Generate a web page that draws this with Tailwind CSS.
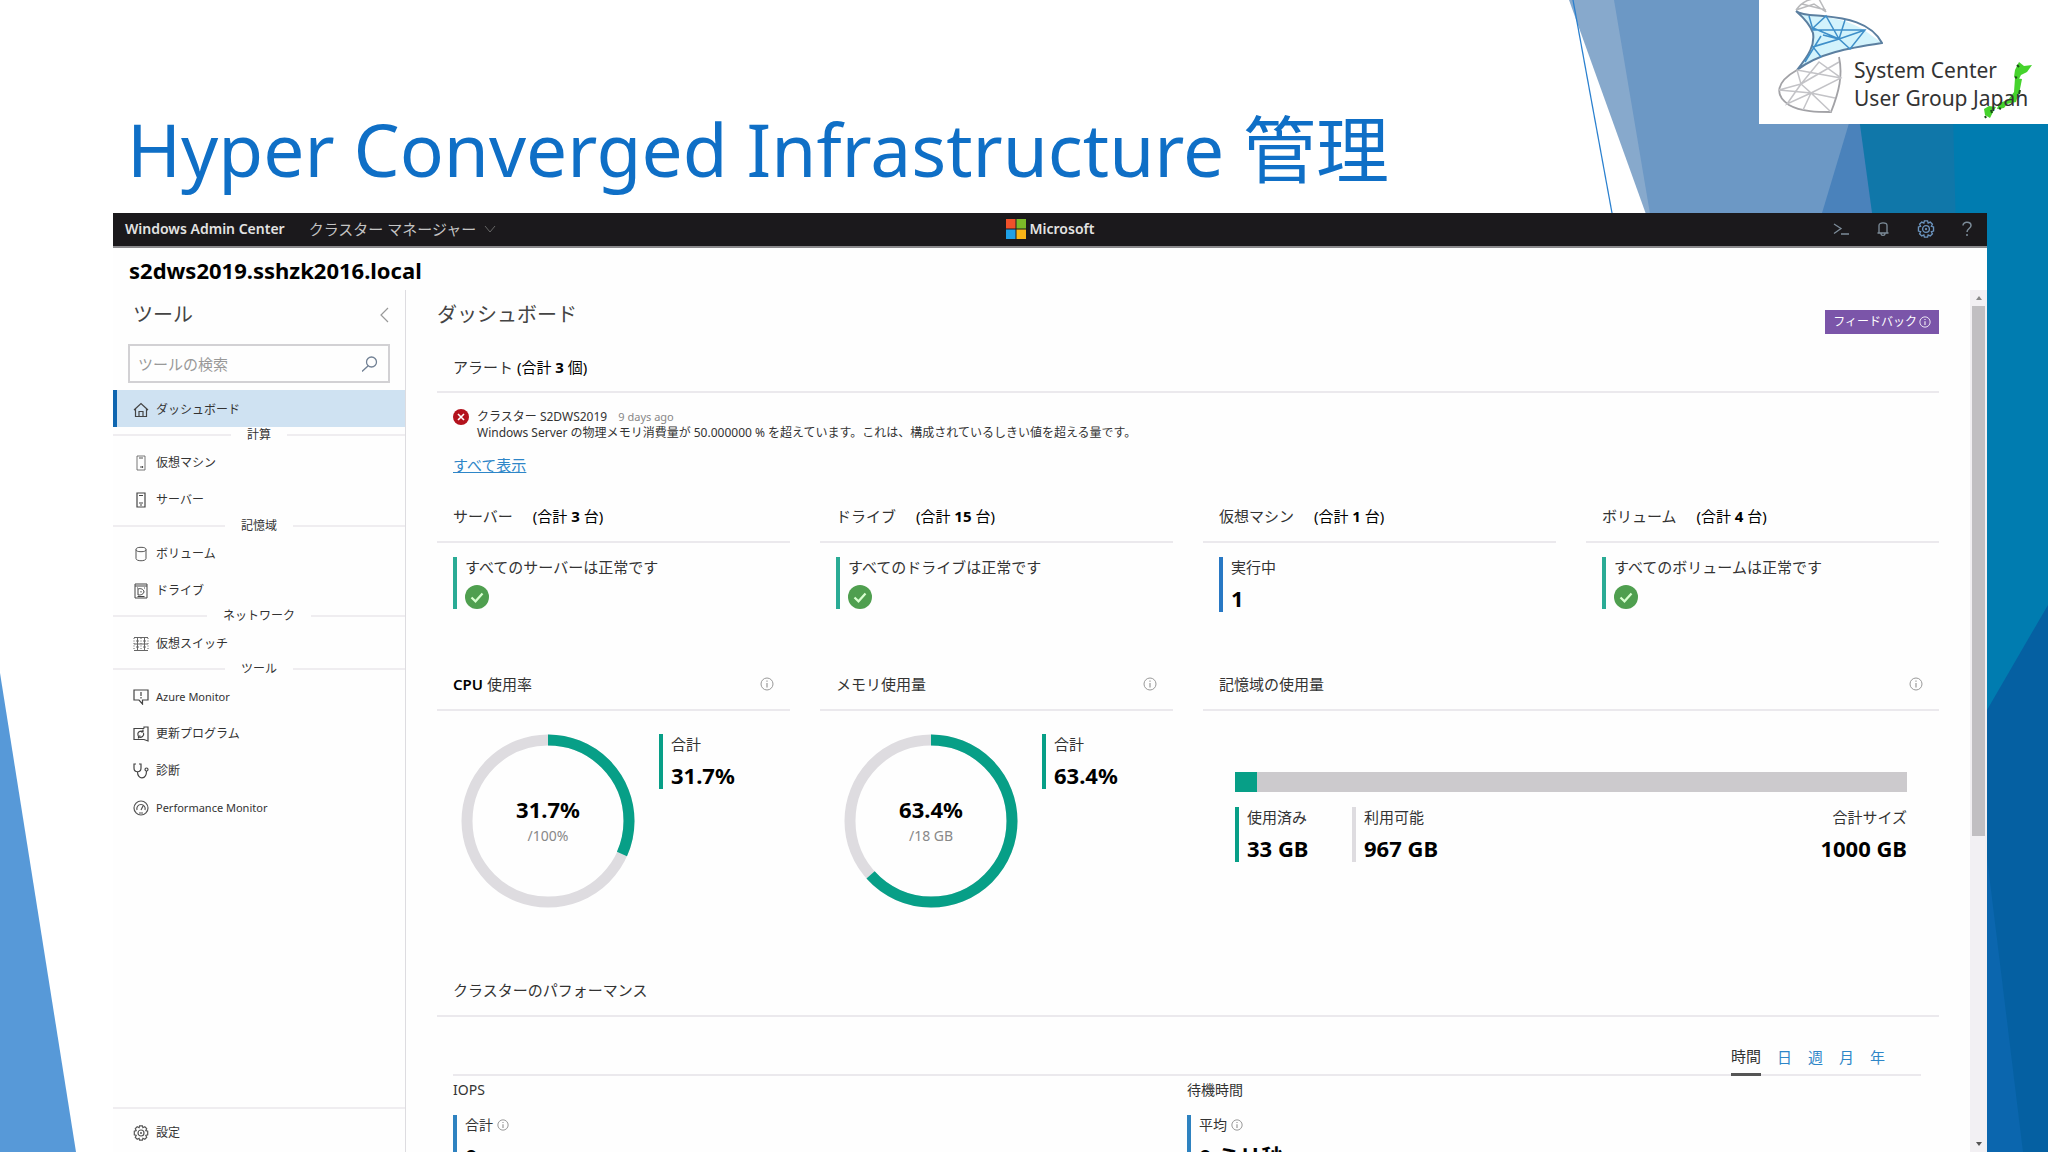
<!DOCTYPE html>
<html lang="ja">
<head>
<meta charset="utf-8">
<title>Hyper Converged Infrastructure 管理</title>
<script src="https://cdn.jsdelivr.net/npm/@tailwindcss/browser@4"></script>
</head>
<body class="bg-white font-['Noto_Sans','Noto_Sans_CJK_JP',sans-serif] text-[#333]">
<svg class="hidden" aria-hidden="true">
  <symbol id="info" viewBox="0 0 14 14"><circle cx="7" cy="7" r="6" fill="none" stroke="currentColor"/><path d="M7 6v4.500M7 3.500v1.300" stroke="currentColor" stroke-width="1.200"/></symbol>
  <symbol id="ok" viewBox="0 0 24 24"><circle cx="12" cy="12" r="12" fill="#4f9f4f"/><path d="M6.500 12.500l4 3.800L17.500 8.500" fill="none" stroke="#d8ffd0" stroke-width="2.200"/></symbol>
  <symbol id="gear" viewBox="0 0 16 16"><path d="M6.600 0.800h2.800l.5 1.900 1.900-.9 1.900 1.900-.9 1.900 1.900.6v3.600l-1.900.6.9 1.900-1.900 1.900-1.900-.9-.5 1.900H6.600l-.5-1.900-1.900.9-1.900-1.900.9-1.900-1.900-.6V6.200l1.900-.6-.9-1.900 1.900-1.900 1.900.9z" fill="none" stroke="currentColor" stroke-width="1.200"/><circle cx="8" cy="8" r="3" fill="none" stroke="currentColor" stroke-width="1.200"/><circle cx="8" cy="8" r="1" fill="currentColor"/></symbol>
</svg>

<div class="relative flex h-screen flex-col overflow-hidden">
  <svg class="absolute inset-0 h-full w-full" viewBox="0 0 2048 1152" preserveAspectRatio="none" aria-hidden="true">
    <path d="M0 673L76 1152H0z" fill="#5799d8"/>
    <path d="M1569 0H2048V1152H1983z" fill="#87a9cc"/>
    <path d="M1614 0H2048V1152H1808z" fill="#6c98c5"/>
    <path d="M1886 0H2048V1152H1540z" fill="#4a82bb"/>
    <path d="M1843 0H2048V1152H2000z" fill="#1077a9"/>
    <path d="M1950 0H2048V1152H1980z" fill="#007cb0"/>
    <path d="M1987 710L2048 605V1152H1980z" fill="#0560a2"/>
    <path d="M1980 800L2023 1152H1980z" fill="#0b66ae"/>
    <path d="M1573 0L1612 213" stroke="#2a80cf" stroke-width="1.300"/>
  </svg>

  <header class="relative flex h-[213px] shrink-0 items-start pl-[127px]">
    <h1 class="pt-[99px] text-[73px] leading-[100px] whitespace-nowrap text-[#0f6fc6]">Hyper Converged Infrastructure 管理</h1>
  </header>
  <div class="absolute top-0 right-0 flex h-[124px] w-[289px] bg-white">
    <svg class="h-[124px] w-[124px] shrink-0" viewBox="0 0 124 124" fill="none" aria-hidden="true">
      <path d="M37 11C53 18 80 14 105 30L123 43C90 48 60 53 38 70C50 55 56 45 54 33C51 24 45 18 37 11z" fill="#d3f3fc"/>
      <path d="M37 10C42 3 50 -2 60 -1L67 12M37 10L55 4L67 12M43 4L67 10" stroke="#b9babc" stroke-width="1.500"/>
      <path d="M37 11C42 15 52 15 64 16C86 18 112 22 123 43C90 48 60 53 38 70C50 55 56 45 54 33C51 24 45 18 37 11z" stroke="#5b7fa0" stroke-width="2"/>
      <path d="M50 16L54 30L106 30L91 49L80 39L54 28L67 16L80 39L54 47L62 57M86 20L80 39L64 35M53 47L80 39L106 30M46 62L62 36" stroke="#3e8fc9" stroke-width="1.500"/>
      <path d="M38 70C17 82 15 95 30 105C42 112 60 112 72 112C80 92 84 75 80 57" stroke="#a2a2a6" stroke-width="1.800"/>
      <path d="M38 70L42 84L20 90L52 93L72 112M42 84L28 104L52 93L82 78L60 62L42 84M80 62L42 84L52 93L44 110M38 70L82 78M52 93L76 98" stroke="#c3c3c7" stroke-width="1.500"/>
    </svg>
    <svg class="absolute top-[58px] left-[220px] h-[64px] w-[56px]" viewBox="0 0 56 64" aria-hidden="true"><path d="M40 4l5 4 8-1-5 7-6 3-2 4-5-2 1-7zM36 20l7 1-2 10-4 13-9 2-3 4-7 1 2-6 9-3 6-8zM10 48l7 1-3 5-3 6-5-3-1-6z" fill="#45d32c"/><path d="M38 7l2 2M36 19l2 1M12 52l1 3M6 58l1 2M20 50l2 1M41 32l-1 4" stroke="#174d16" stroke-width="2"/></svg>
    <p class="relative -ml-[29px] pt-[56px] text-[21px] leading-7 whitespace-nowrap text-[#333]">System Center<br>User Group Japan</p>
  </div>

  <div class="relative mr-[61px] ml-[113px] flex min-h-0 flex-1 flex-col bg-[#fefefe]">
    <div class="grid h-[35px] shrink-0 grid-cols-[1fr_auto_1fr] items-center border-b-2 border-[#8b8a8d] bg-[#1b191c] px-3 pb-[2px] text-[#e3e3e3]">
      <div class="flex items-center gap-6">
        <span class="text-[14px] leading-5 font-semibold">Windows Admin Center</span>
        <button class="flex items-center gap-2 text-[15px] leading-5 text-[#c4c4c4]">クラスター マネージャー
          <svg class="h-3 w-3" viewBox="0 0 12 12" fill="none" stroke="#666" aria-hidden="true"><path d="M1 3l5 6 5-6"/></svg></button>
      </div>
      <div class="flex items-center gap-1 text-[14px] leading-5 font-semibold">
        <svg class="h-5 w-5" viewBox="0 0 20 20" aria-hidden="true"><path d="M0 0h9.500v9.500H0z" fill="#f0512a"/><path d="M10.500 0H20v9.500h-9.500z" fill="#7db928"/><path d="M0 10.500h9.500V20H0z" fill="#1fa0e6"/><path d="M10.500 10.500H20V20h-9.500z" fill="#f9b517"/></svg>
        Microsoft</div>
      <div class="flex items-center justify-end gap-[26px] pr-[2px] text-[#7d8c99]">
        <button aria-label="PowerShell"><svg class="block h-4 w-4" viewBox="0 0 16 16" fill="none" stroke="currentColor" stroke-width="1.300"><path d="M1 3l7 4.500-7 5M8 13h8"/></svg></button>
        <button aria-label="通知"><svg class="block h-4 w-4" viewBox="0 0 16 16" fill="none" stroke="currentColor" stroke-width="1.300"><path d="M4 12V4.500C4 1 12 1 12 4.500V12M2.500 12h11M6 12.500c0 2.500 4 2.500 4 0"/></svg></button>
        <button aria-label="設定" class="text-[#6b93bd]"><svg class="block h-[18px] w-[18px]"><use href="#gear"/></svg></button>
        <button aria-label="ヘルプ"><svg class="block h-4 w-3" viewBox="0 0 12 16" fill="none" stroke="currentColor" stroke-width="1.500"><path d="M2 4.500C2 0 10 .5 10 4.500 10 7.500 6 7.500 6 11M6 13v2"/></svg></button>
      </div>
    </div>
    <h2 class="h-[42px] shrink-0 px-4 text-[22px] leading-[44px] font-bold text-black">s2dws2019.sshzk2016.local</h2>

    <div class="flex min-h-0 flex-1">
      <aside class="flex w-[293px] shrink-0 flex-col border-r border-[#dddce0]">
        <div class="flex h-12 items-center justify-between pt-[2px] pr-[14px] pl-5">
          <h3 class="text-[20px] leading-6 text-[#444]">ツール</h3>
          <button aria-label="折りたたむ"><svg class="block h-4 w-3" viewBox="0 0 12 16" fill="none" stroke="#999" stroke-width="1.200"><path d="M9 1L2 8l7 7"/></svg></button>
        </div>
        <div class="mx-[15px] mt-[6px] flex h-[39px] items-center justify-between border-2 border-[#d2d1d4] px-2">
          <input aria-label="ツールの検索" placeholder="ツールの検索" class="w-40 bg-transparent text-[15px] leading-5 outline-none placeholder:text-[#999]">
          <svg class="mr-[2px] h-4 w-4" viewBox="0 0 16 16" fill="none" stroke="#718094" stroke-width="1.300" aria-hidden="true"><circle cx="9.500" cy="6" r="5"/><path d="M6 10L0 15.500"/></svg>
        </div>
        <nav class="mt-[7px] flex flex-col text-[12px] leading-4">
          <a href="#" class="flex h-[37px] items-center gap-[7px] border-l-4 border-[#0f66b0] bg-[#cfe2f2] pt-[2px] pl-4"><svg class="h-4 w-4" viewBox="0 0 16 16" fill="none" stroke="#444" stroke-width="1.200"><path d="M1 8l7-6.500L15 8M2.500 7v7.500h11V7M6 14.500V9.500h4v5"/></svg>ダッシュボード</a>
          <div class="flex h-4 items-center gap-[16px]"><span class="h-[2px] flex-1 bg-[#efedf0]"></span>計算<span class="h-[2px] flex-1 bg-[#efedf0]"></span></div>
          <a href="#" class="flex h-[37px] items-center gap-[7px] pt-[2px] pl-5"><svg class="h-4 w-4" viewBox="0 0 16 16" fill="none" stroke="#555"><path d="M4 1h8M4 15h8M4 1v14M12 1v14" stroke-width=".8"/><path d="M6 3h4M7 12h2M9.500 11v2" stroke-width="1.200"/></svg>仮想マシン</a>
          <a href="#" class="flex h-[37px] items-center gap-[7px] pt-[2px] pl-5"><svg class="h-4 w-4" viewBox="0 0 16 16" fill="none" stroke="#444" stroke-width="1.200"><path d="M4 1h8v14H4zM6 3.500h4M6 11h4M7 13h2"/></svg>サーバー</a>
          <div class="flex h-[17px] items-center gap-[16px]"><span class="h-[2px] flex-1 bg-[#efedf0]"></span>記憶域<span class="h-[2px] flex-1 bg-[#efedf0]"></span></div>
          <a href="#" class="flex h-[37px] items-center gap-[7px] pt-[2px] pl-5"><svg class="h-4 w-4" viewBox="0 0 16 16" fill="none" stroke="#555"><ellipse cx="8" cy="3.500" rx="5" ry="2.200"/><path d="M3 3.500v9c0 3 10 3 10 0v-9"/></svg>ボリューム</a>
          <a href="#" class="flex h-[37px] items-center gap-[7px] pt-[2px] pl-5"><svg class="h-4 w-4" viewBox="0 0 16 16" fill="none" stroke="#444"><path d="M2 1h12v14H2zM2 3h12M4 5h1M11 5h1"/><path d="M5 12V6c2-1 6 0 6 3-1 3-4 3-6 3zM8 8v1.500M4.500 13.500h7"/></svg>ドライブ</a>
          <div class="flex h-4 items-center gap-[16px]"><span class="h-[2px] flex-1 bg-[#efedf0]"></span>ネットワーク<span class="h-[2px] flex-1 bg-[#efedf0]"></span></div>
          <a href="#" class="flex h-[37px] items-center gap-[7px] pt-[2px] pl-5"><svg class="h-4 w-4" viewBox="0 0 16 16" fill="none" stroke="#666"><path d="M1 1.500h14M1 8h14M1 14.500h14M4.500 2v12M11.500 2v12M3 5h3M10 5h3M3 11h3M10 11h3"/><path d="M1 2v12M15 2v12M8 2v12" stroke-dasharray="1 1.500"/></svg>仮想スイッチ</a>
          <div class="flex h-4 items-center gap-[16px]"><span class="h-[2px] flex-1 bg-[#efedf0]"></span>ツール<span class="h-[2px] flex-1 bg-[#efedf0]"></span></div>
          <a href="#" class="flex h-[37px] items-center gap-[7px] pt-[2px] pl-5 text-[11px]"><svg class="h-4 w-4" viewBox="0 0 16 16" fill="none" stroke="#444" stroke-width="1.200"><path d="M1 1h14v10H9.500v4L6 11H1zM8 3v4M8 8v1.500"/></svg>Azure Monitor</a>
          <a href="#" class="flex h-[37px] items-center gap-[7px] pt-[2px] pl-5"><svg class="h-4 w-4" viewBox="0 0 16 16" fill="none" stroke="#444" stroke-width="1.200"><path d="M11 2.500V1h4v14l-4-1.500H1v-11h10"/><path d="M5 9.500C4 6 7 4.500 10 5.500M10 3.500v2.500H8M10.500 7c1 3-2 5-5 4M5.500 12.500V10h2"/></svg>更新プログラム</a>
          <a href="#" class="flex h-[37px] items-center gap-[7px] pt-[2px] pl-5"><svg class="h-4 w-4" viewBox="0 0 16 16" fill="none" stroke="#444" stroke-width="1.200"><path d="M3 1H1v4c0 5 7 5 7 0V1H6M4.500 9c0 8 9 8 9-1"/><circle cx="13.500" cy="6.500" r="1.500"/></svg>診断</a>
          <a href="#" class="flex h-[37px] items-center gap-[7px] pt-[2px] pl-5 text-[11px]"><svg class="h-4 w-4" viewBox="0 0 16 16" fill="none" stroke="#555" stroke-width="1.200"><circle cx="8" cy="8" r="7"/><path d="M4 10a4.200 4.200 0 1 1 8 0M8 10l2.500-5M6 13h4"/></svg>Performance Monitor</a>
        </nav>
        <a href="#" class="mt-auto flex h-[45px] items-center gap-[7px] border-t-2 border-[#efedf0] pt-1 pl-5 text-[12px] leading-4"><svg class="h-4 w-4 text-[#555]"><use href="#gear"/></svg>設定</a>
      </aside>

      <main class="min-w-0 flex-1 overflow-hidden px-[31px] text-[15px] leading-5">
        <div class="flex h-12 items-center justify-between">
          <h3 class="pt-[2px] text-[20px] leading-6 text-[#444]">ダッシュボード</h3>
          <button class="mt-4 flex h-6 items-center gap-[2px] bg-[#7b55a9] px-2 text-[12px] leading-4 text-white">フィードバック<svg class="h-3 w-3"><use href="#info"/></svg></button>
        </div>
        <h4 class="mt-[19px] border-b-2 border-[#ebe9ed] px-4 pb-[14px]">アラート <span class="text-black">(合計 <b>3</b> 個)</span></h4>
        <section class="px-4 pt-4">
          <div class="flex gap-2 text-[12px] leading-4">
            <svg class="h-4 w-4 shrink-0" viewBox="0 0 16 16" aria-hidden="true"><circle cx="8" cy="8" r="8" fill="#b3121d"/><path d="M5 5l6 6M11 5l-6 6" stroke="#fff" stroke-width="1.600"/></svg>
            <div><p>クラスター S2DWS2019 <span class="ml-2 text-[11px] text-[#888]">9 days ago</span></p><p>Windows Server の物理メモリ消費量が 50.000000 % を超えています。これは、構成されているしきい値を超える量です。</p></div>
          </div>
          <a href="#" class="mt-[14px] inline-block text-[#2e86c8] underline">すべて表示</a>
        </section>

        <div class="mt-[31px] grid grid-cols-4 gap-x-[30px]">
          <section><h4 class="border-b-2 border-[#ebe9ed] px-4 pb-[15px]">サーバー <span class="ml-4 text-black">(合計 <b>3</b> 台)</span></h4>
            <div class="mt-[14px] ml-4 h-[52px] border-l-4 border-[#2aab95] pl-2"><p>すべてのサーバーは正常です</p><svg class="mt-2 h-6 w-6"><use href="#ok"/></svg></div></section>
          <section><h4 class="border-b-2 border-[#ebe9ed] px-4 pb-[15px]">ドライブ <span class="ml-4 text-black">(合計 <b>15</b> 台)</span></h4>
            <div class="mt-[14px] ml-4 h-[52px] border-l-4 border-[#2aab95] pl-2"><p>すべてのドライブは正常です</p><svg class="mt-2 h-6 w-6"><use href="#ok"/></svg></div></section>
          <section><h4 class="border-b-2 border-[#ebe9ed] px-4 pb-[15px]">仮想マシン <span class="ml-4 text-black">(合計 <b>1</b> 台)</span></h4>
            <div class="mt-[14px] ml-4 h-[55px] border-l-4 border-[#2878c4] pl-2"><p>実行中</p><p class="mt-[5px] text-[22px] leading-8 font-bold text-black">1</p></div></section>
          <section><h4 class="border-b-2 border-[#ebe9ed] px-4 pb-[15px]">ボリューム <span class="ml-4 text-black">(合計 <b>4</b> 台)</span></h4>
            <div class="mt-[14px] ml-4 h-[52px] border-l-4 border-[#2aab95] pl-2"><p>すべてのボリュームは正常です</p><svg class="mt-2 h-6 w-6"><use href="#ok"/></svg></div></section>
        </div>

        <div class="mt-[62px] grid grid-cols-4 gap-x-[30px]">
          <section class="h-[306px]"><h4 class="flex items-center justify-between border-b-2 border-[#ebe9ed] px-4 pb-[15px]"><span><b class="font-semibold text-black">CPU</b> 使用率</span><svg class="h-[14px] w-[14px] text-[#999]"><use href="#info"/></svg></h4>
            <div class="flex items-start gap-6 pt-[23px] pl-6">
              <div class="relative h-[174px] w-[174px] shrink-0">
                <svg class="h-full w-full -rotate-90" viewBox="0 0 174 174" fill="none" stroke-width="11" aria-hidden="true"><circle cx="87" cy="87" r="81" stroke="#dedce0"/><circle cx="87" cy="87" r="81" stroke="#079f87" pathLength="100" stroke-dasharray="31.700 100"/></svg>
                <div class="absolute inset-0 flex flex-col items-center justify-center pt-[2px]"><b class="text-[22px] leading-7 text-black">31.7%</b><span class="text-[14px] leading-[26px] text-[#888]">/100%</span></div>
              </div>
              <div class="h-[55px] border-l-4 border-[#079f87] pl-2"><p>合計</p><p class="mt-[5px] text-[22px] leading-8 font-bold text-black">31.7%</p></div>
            </div></section>
          <section><h4 class="flex items-center justify-between border-b-2 border-[#ebe9ed] px-4 pb-[15px]">メモリ使用量<svg class="h-[14px] w-[14px] text-[#999]"><use href="#info"/></svg></h4>
            <div class="flex items-start gap-6 pt-[23px] pl-6">
              <div class="relative h-[174px] w-[174px] shrink-0">
                <svg class="h-full w-full -rotate-90" viewBox="0 0 174 174" fill="none" stroke-width="11" aria-hidden="true"><circle cx="87" cy="87" r="81" stroke="#dedce0"/><circle cx="87" cy="87" r="81" stroke="#079f87" pathLength="100" stroke-dasharray="63.400 100"/></svg>
                <div class="absolute inset-0 flex flex-col items-center justify-center pt-[2px]"><b class="text-[22px] leading-7 text-black">63.4%</b><span class="text-[14px] leading-[26px] text-[#888]">/18 GB</span></div>
              </div>
              <div class="h-[55px] border-l-4 border-[#079f87] pl-2"><p>合計</p><p class="mt-[5px] text-[22px] leading-8 font-bold text-black">63.4%</p></div>
            </div></section>
          <section class="col-span-2"><h4 class="flex items-center justify-between border-b-2 border-[#ebe9ed] px-4 pb-[15px]">記憶域の使用量<svg class="h-[14px] w-[14px] text-[#999]"><use href="#info"/></svg></h4>
            <div class="px-8 pt-[61px]">
              <div class="h-5 bg-[#cccacd]"><div class="h-full bg-[#079f87]" style="width:3.300%"></div></div>
              <div class="mt-[15px] flex">
                <div class="h-[55px] w-[117px] border-l-4 border-[#079f87] pl-2"><p>使用済み</p><p class="mt-[5px] text-[22px] leading-8 font-bold text-black">33 GB</p></div>
                <div class="h-[55px] border-l-4 border-[#dedce0] pl-2"><p>利用可能</p><p class="mt-[5px] text-[22px] leading-8 font-bold text-black">967 GB</p></div>
                <div class="ml-auto text-right"><p>合計サイズ</p><p class="mt-[5px] text-[22px] leading-8 font-bold text-black">1000 GB</p></div>
              </div>
            </div></section>
        </div>

        <h4 class="border-b-2 border-[#ebe9ed] px-4 pb-[15px]">クラスターのパフォーマンス</h4>
        <div class="mr-[18px] ml-4">
          <div class="mt-[29px] flex justify-end gap-4 border-b-2 border-[#ebe9ed] pr-9 text-[#2e86c8]">
            <button class="-mb-[2px] border-b-[3px] border-[#555] pb-[7px] text-[#333]">時間</button><button class="pb-[7px]">日</button><button class="pb-[7px]">週</button><button class="pb-[7px]">月</button><button class="pb-[7px]">年</button>
          </div>
          <div class="grid grid-cols-2 pt-1 text-[14px]">
            <section><h5>IOPS</h5><div class="mt-[15px] h-[55px] border-l-4 border-[#2e82c0] pl-2"><p class="flex items-center gap-1">合計<svg class="h-3 w-3 text-[#888]"><use href="#info"/></svg></p><p class="mt-[5px] text-[22px] leading-8 font-bold text-black">0</p></div></section>
            <section><h5>待機時間</h5><div class="mt-[15px] h-[55px] border-l-4 border-[#2e82c0] pl-2"><p class="flex items-center gap-1">平均<svg class="h-3 w-3 text-[#888]"><use href="#info"/></svg></p><p class="mt-[5px] text-[22px] leading-8 font-bold text-black">0 ミリ秒</p></div></section>
          </div>
        </div>
      </main>
      <div class="flex w-[17px] shrink-0 flex-col items-center bg-[#f2f0f3]" aria-hidden="true">
        <svg class="my-1 h-2 w-2" viewBox="0 0 8 8"><path d="M4 2l3 4H1z" fill="#888"/></svg>
        <div class="h-[530px] w-[13px] bg-[#c1bfc2]"></div>
        <svg class="mt-auto mb-1 h-2 w-2" viewBox="0 0 8 8"><path d="M4 6L1 2h6z" fill="#555"/></svg>
      </div>
    </div>
  </div>
</div>
</body>
</html>
